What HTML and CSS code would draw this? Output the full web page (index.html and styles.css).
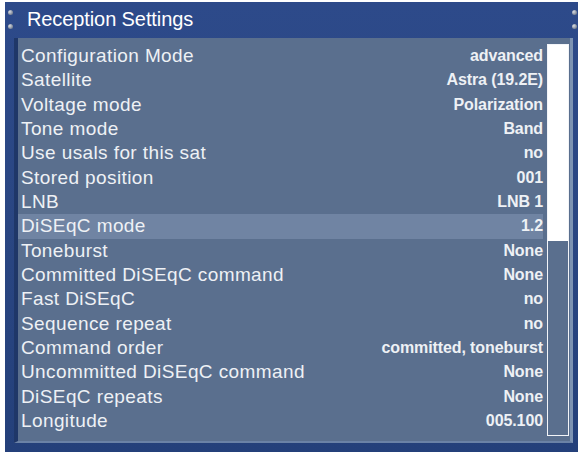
FILE: index.html
```html
<!DOCTYPE html>
<html>
<head>
<meta charset="utf-8">
<link rel="stylesheet" href="styles.css">
</head>
<body>
<div class="frame">
  <span class="bolt b1"></span><span class="bolt b2"></span>
  <span class="bolt b3"></span><span class="bolt b4"></span>
  <div class="title">Reception Settings</div>
  <div class="panel">
    <div class="list">
      <div class="row"><span class="label">Configuration Mode</span><span class="value">advanced</span></div>
      <div class="row"><span class="label">Satellite</span><span class="value">Astra (19.2E)</span></div>
      <div class="row"><span class="label">Voltage mode</span><span class="value">Polarization</span></div>
      <div class="row"><span class="label">Tone mode</span><span class="value">Band</span></div>
      <div class="row"><span class="label">Use usals for this sat</span><span class="value">no</span></div>
      <div class="row"><span class="label">Stored position</span><span class="value">001</span></div>
      <div class="row"><span class="label">LNB</span><span class="value">LNB 1</span></div>
      <div class="row selected"><span class="label">DiSEqC mode</span><span class="value">1.2</span></div>
      <div class="row"><span class="label">Toneburst</span><span class="value">None</span></div>
      <div class="row"><span class="label">Committed DiSEqC command</span><span class="value">None</span></div>
      <div class="row"><span class="label">Fast DiSEqC</span><span class="value">no</span></div>
      <div class="row"><span class="label">Sequence repeat</span><span class="value">no</span></div>
      <div class="row"><span class="label">Command order</span><span class="value">committed, toneburst</span></div>
      <div class="row"><span class="label">Uncommitted DiSEqC command</span><span class="value">None</span></div>
      <div class="row"><span class="label">DiSEqC repeats</span><span class="value">None</span></div>
      <div class="row"><span class="label">Longitude</span><span class="value">005.100</span></div>
    </div>
    <div class="scrollbar"><div class="thumb"></div></div>
  </div>
</div>
</body>
</html>
```

FILE: styles.css
```css
html, body {
  margin: 0;
  padding: 0;
  background: #ffffff;
}
body {
  width: 581px;
  height: 454px;
  overflow: hidden;
  font-family: "Liberation Sans", Arial, sans-serif;
}
.frame {
  position: relative;
  margin: 2px 3px 0 5px;
  height: 450px;
  box-sizing: border-box;
  background: linear-gradient(#2d4a8a, #2a4682 50%, #24407a);
  display: flex;
  flex-direction: column;
  padding: 0 5px 9px 9px;
}
.bolt {
  position: absolute;
  width: 5px;
  height: 5px;
  border-radius: 50%;
  background: radial-gradient(circle at 35% 35%, #d8dce4, #7a8494 70%);
}
.b1 { left: 3px; top: 8px; }
.b2 { left: 3px; top: 22px; }
.b3 { right: 1px; top: 8px; }
.b4 { right: 1px; top: 22px; }
.title {
  height: 36px;
  line-height: 35px;
  color: #ffffff;
  font-size: 20px;
  padding-left: 13px;
  letter-spacing: -0.1px;
}
.panel {
  flex: 1;
  display: flex;
  background: #5a6f8e;
  border-left: 4px solid #1f3768;
  border-right: 3px solid #7d93b2;
  border-bottom: 2px solid #6b82a6;
  padding: 6px 1px 0 0;
}
.list {
  flex: 1;
  display: flex;
  flex-direction: column;
}
.row {
  height: 24.33px;
  display: flex;
  align-items: center;
  justify-content: space-between;
  padding: 0 0 0 3px;
}
.row.selected {
  background: #7084a3;
}
.label {
  color: #eef1f5;
  font-size: 19px;
  letter-spacing: 0.4px;
}
.value {
  color: #eef1f5;
  font-size: 16px;
  font-weight: bold;
  letter-spacing: -0.1px;
}
.scrollbar {
  width: 22px;
  height: 392px;
  margin-left: 4px;
  border: 1px solid #f2f4f8;
  box-sizing: border-box;
}
.thumb {
  height: 196px;
  background: #ffffff;
}
```
